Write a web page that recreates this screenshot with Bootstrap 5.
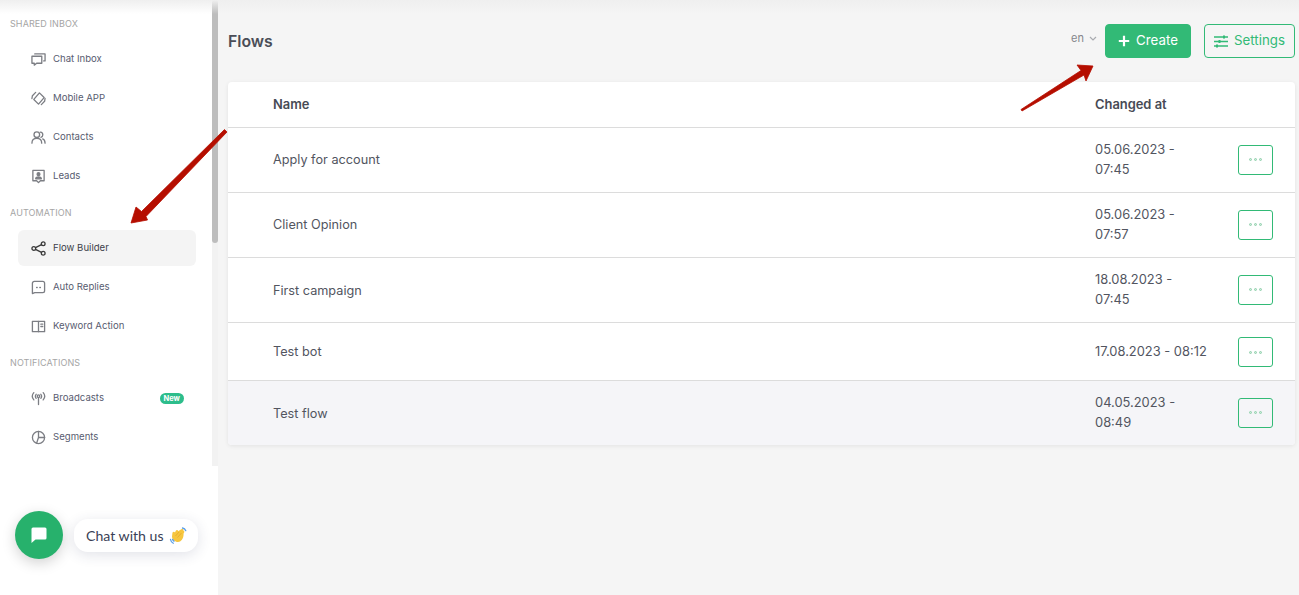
<!DOCTYPE html>
<html lang="en">
<head>
<meta charset="utf-8">
<title>Flows</title>
<link href="https://cdn.jsdelivr.net/npm/bootstrap@5.3.0/dist/css/bootstrap.min.css" rel="stylesheet">
<style>
html,body{height:595px;overflow:hidden}
body{background:#f5f5f5;font-family:Inter,"Liberation Sans",sans-serif;color:#4b4f5c;position:relative}
.shell{height:595px}
.side{width:218px;height:595px;background:#fff;flex:none;position:relative}
.side-scroll{width:218px;height:466px;padding-top:17px}
.track{position:absolute;right:0;top:0;width:6px;height:466px;background:#f2f2f2}
.thumb{width:6px;height:243px;background:#bdbdbd;border-radius:3px}
.sec{font-size:9px;line-height:14px;color:#a5a5a5;padding-left:10px;letter-spacing:.1px;text-transform:uppercase}
.item{margin-left:18px;width:178px;height:36px;border-radius:6px;padding-left:13px;gap:7px;font-size:9.6px;color:#585c70;text-decoration:none;margin-bottom:3px}
.item svg{width:15px;height:15px;flex:none;fill:none;stroke:#7c7e84;stroke-width:1.4;stroke-linecap:round;stroke-linejoin:round}
.item.on{background:#f4f4f4;color:#3c3f4a}
.item.on svg{stroke:#3a3a3a}
.first-list{margin-top:10px}
.sec-a{margin-top:12px;margin-bottom:10px}
.sec-b{margin-top:12px;margin-bottom:10px}
.new-pill{margin-left:auto;margin-right:12px;background:#2dbd8b;color:#fff;font-size:7.500px;font-weight:700;line-height:11px;height:11px;border-radius:6px;padding:0 4px}
.chat-round{position:absolute;left:15px;top:511px;width:48px;height:48px;border-radius:50%;background:#27b16c;box-shadow:0 4px 14px rgba(0,0,0,.18)}
.chat-label{position:absolute;left:74px;top:519px;width:124px;height:33px;border-radius:14px;background:#fff;box-shadow:0 3px 14px rgba(40,50,90,.14);font-family:Lato,sans-serif;font-size:14.100px;color:#3a3f56;padding-left:12px;gap:5px}
.main{flex:1;padding:24px 4px 0 10px;min-width:0}
.head{height:34px;margin-bottom:24px}
.title{font-size:15.800px;font-weight:600;color:#4a4d57;margin:0;position:relative;top:1px}
.lang{font-size:11px;color:#85878c;margin-right:8px;gap:5px;position:relative;top:-3px}
.btn-make{background:#32ba76;border:1px solid #32ba76;color:#fff;font-size:13.300px;height:34px;width:86px;border-radius:4px;padding:0;margin-right:13px;gap:6px}
.btn-set{background:transparent;border:1px solid #32ba76;color:#32ba76;font-size:13.300px;height:34px;width:91px;border-radius:4px;padding:0;gap:6px}
.sheet{background:#fff;border-radius:4px;box-shadow:0 1px 4px rgba(0,0,0,.08);overflow:hidden}
.flows{table-layout:fixed;margin:0;font-size:12.700px;--bs-table-color:#52555f;color:#52555f}
.flows th{font-weight:600;font-size:12.900px;color:#474a55;height:45px;border-bottom:1px solid #dcdcdc;vertical-align:middle;padding:0}
.flows td{vertical-align:middle;padding:0;border-bottom:1px solid #dcdcdc;line-height:20px;height:65px;color:#52555f}
.flows tr.short td{height:58px}
.flows tr:last-child td{border-bottom:0;height:65px}
.flows tr.hot td{background:#f5f5f8}
.flows td.nudge{padding-top:2px}
.stamp{font-size:12.900px}
.c-name{padding-left:45px!important}
.btn-dots{width:35px;height:30px;background:transparent;border:1px solid #32ba76;border-radius:3px;padding:0;gap:2px;margin-left:143px}
.btn-dots i{width:3px;height:3px;border-radius:50%;background:#cdebdb;border:.5px solid #8fd0ac;display:block}
.arrows{position:absolute;left:0;top:0;pointer-events:none}
.topfade{position:absolute;left:0;top:0;width:100%;height:14px;background:linear-gradient(#efefef,rgba(245,245,245,0));pointer-events:none}
</style>
</head>
<body>
<div class="shell d-flex">
  <aside class="side">
    <div class="side-scroll">
      <div class="sec">Shared Inbox</div>
      <div class="first-list">
        <a class="item d-flex align-items-center" href="#"><svg viewBox="0 0 16 16"><path d="M1 4.500h10.500v7.500H6l-2.500 2V12H1z"/><path d="M4 2h11v7.500h-1.500"/></svg>Chat Inbox</a>
        <a class="item d-flex align-items-center" href="#"><svg viewBox="0 0 16 16"><path d="M9 2l5 5-6 7-5-5z"/><path d="M5 1.500L1.500 5 1 8M11 14.500l3.500-3.500.5-3"/></svg>Mobile APP</a>
        <a class="item d-flex align-items-center" href="#"><svg viewBox="0 0 16 16"><circle cx="6.200" cy="5" r="3"/><path d="M1 14c0-3.200 2.200-5 5.200-5s5.200 1.800 5.200 5M10 2.200c1.600.2 2.600 1.400 2.600 2.800s-.8 2.400-2 2.800M12.500 9.500c1.600.7 2.500 2.300 2.500 4.500"/></svg>Contacts</a>
        <a class="item d-flex align-items-center" href="#"><svg viewBox="0 0 16 16"><path d="M2 1.500h12v11h-4L8 14.500l-2-2H2z"/><circle cx="8" cy="5.500" r="1.500" fill="#7c7e84"/><path d="M5 10.500c0-1.500 1.300-2 3-2s3 .5 3 2z" fill="#7c7e84"/></svg>Leads</a>
      </div>
      <div class="sec sec-a">Automation</div>
      <a class="item on d-flex align-items-center" href="#"><svg viewBox="0 0 16 16"><circle cx="3" cy="8" r="2"/><circle cx="13" cy="3" r="2"/><circle cx="13" cy="13" r="2"/><path d="M4.800 7.100L11.200 3.900M4.800 8.900l6.400 3.200"/></svg>Flow Builder</a>
      <a class="item d-flex align-items-center" href="#"><svg viewBox="0 0 16 16"><path d="M3.500 1.500h9a2 2 0 0 1 2 2v8a2 2 0 0 1-2 2H4l-2.500 1V3.500a2 2 0 0 1 2-2z"/><path d="M6 8h.6M9.400 8h.6"/></svg>Auto Replies</a>
      <a class="item d-flex align-items-center" href="#"><svg viewBox="0 0 16 16"><rect x="1.500" y="2.500" width="13" height="11"/><path d="M8 2.500v11M10.500 5.500h2M10.500 8h2"/></svg>Keyword Action</a>
      <div class="sec sec-b">Notifications</div>
      <a class="item d-flex align-items-center" href="#"><svg viewBox="0 0 16 16"><circle cx="8" cy="5.500" r="1.300"/><path d="M8 7v7.500M5.500 3.500c-1 1.300-1 3 0 4.300M10.500 3.500c1 1.300 1 3 0 4.300M3 1.800c-2 2.300-2 5.400 0 7.700M13 1.800c2 2.300 2 5.400 0 7.700"/></svg>Broadcasts<span class="new-pill">New</span></a>
      <a class="item d-flex align-items-center" href="#"><svg viewBox="0 0 16 16"><circle cx="8" cy="8" r="6.500"/><path d="M8 1.500V8h6.500M8 8l-2 6"/></svg>Segments</a>
    </div>
    <div class="track"><div class="thumb"></div></div>
    <div class="chat-round d-flex align-items-center justify-content-center">
      <svg width="18" height="18" viewBox="0 0 18 18"><path d="M3 1.500h12A1.500 1.500 0 0 1 16.500 3v9a1.500 1.500 0 0 1-1.500 1.500H5.500L1.500 17V3A1.500 1.500 0 0 1 3 1.500z" fill="#fff"/></svg>
    </div>
    <div class="chat-label d-flex align-items-center">Chat with us
      <svg width="18" height="18" viewBox="0 0 18 18"><path d="M3.500 5.500c.8-1.200 2-1 2.500 0l.8-1.800c.8-1.300 2.300-.8 2.200.6L12.800 2c1-.7 2 .3 1.400 1.200L15 4c.8.8.2 1.600-.4 2.400l-.1 2.100c-.4 3.500-2.500 6.500-5.500 6.500-3 0-6-2.500-6-5.500z" fill="#f6c63f"/><path d="M6.500 9l3.500-4M8.500 10.500L12.500 6" stroke="#e5a92c" stroke-width=".8" fill="none"/><path d="M1.500 12.500c.3 1.700 1.200 2.900 2.800 3.800M3.500 12.300c.3.800.8 1.400 1.500 1.900M13.500 1c1.400.2 2.700 1.100 3.300 2.700" fill="none" stroke="#5a9fe8" stroke-width="1.300" stroke-linecap="round"/></svg>
    </div>
  </aside>
  <main class="main">
    <header class="head d-flex align-items-center">
      <h1 class="title me-auto">Flows</h1>
      <div class="lang d-flex align-items-center">en
        <svg width="8" height="5" viewBox="0 0 8 5"><path d="M1 1l3 3 3-3" fill="none" stroke="#a9abb0" stroke-width="1.200"/></svg>
      </div>
      <button class="btn btn-make d-flex align-items-center justify-content-center" type="button">
        <svg width="12" height="12" viewBox="0 0 12 12"><path d="M6 .8v10.400M.8 6h10.400" stroke="#fff" stroke-width="2.200"/></svg>Create
      </button>
      <button class="btn btn-set d-flex align-items-center justify-content-center" type="button">
        <svg width="14" height="13" viewBox="0 0 14 13" fill="none" stroke="#32ba76" stroke-width="1.400"><path d="M0 2h14M0 6.500h14M0 11h14"/><path d="M10 .5v3M5.500 5v3M3 9.500v3" stroke-width="2"/></svg>Settings
      </button>
    </header>
    <section class="sheet">
      <table class="table flows">
        <colgroup><col style="width:867px"><col></colgroup>
        <thead><tr><th class="c-name">Name</th><th>Changed at</th></tr></thead>
        <tbody>
          <tr><td class="c-name">Apply for account</td><td><div class="d-flex align-items-center"><span class="stamp">05.06.2023 -<br>07:45</span><button class="btn btn-dots d-flex align-items-center justify-content-center position-absolute" type="button"><i></i><i></i><i></i></button></div></td></tr>
          <tr><td class="c-name">Client Opinion</td><td><div class="d-flex align-items-center"><span class="stamp">05.06.2023 -<br>07:57</span><button class="btn btn-dots d-flex align-items-center justify-content-center position-absolute" type="button"><i></i><i></i><i></i></button></div></td></tr>
          <tr><td class="c-name nudge">First campaign</td><td><div class="d-flex align-items-center"><span class="stamp">18.08.2023 -<br>07:45</span><button class="btn btn-dots d-flex align-items-center justify-content-center position-absolute" type="button"><i></i><i></i><i></i></button></div></td></tr>
          <tr class="short"><td class="c-name nudge">Test bot</td><td class="nudge"><div class="d-flex align-items-center"><span class="stamp">17.08.2023 - 08:12</span><button class="btn btn-dots d-flex align-items-center justify-content-center position-absolute" type="button"><i></i><i></i><i></i></button></div></td></tr>
          <tr class="hot"><td class="c-name nudge">Test flow</td><td><div class="d-flex align-items-center"><span class="stamp">04.05.2023 -<br>08:49</span><button class="btn btn-dots d-flex align-items-center justify-content-center position-absolute" type="button"><i></i><i></i><i></i></button></div></td></tr>
        </tbody>
      </table>
    </section>
  </main>
</div>
<svg class="arrows" width="1299" height="595" viewBox="0 0 1299 595">
  <path d="M131 223L136 207 141.500 211.500 224.500 129.500 227 132 146 216.500 147.500 220z" fill="#b50e00" stroke="#b50e00" stroke-width=".8" stroke-linejoin="round"/>
  <path d="M1021 109.500L1081 70.500 1077 65 1093 66 1086 81 1084 75 1022 111z" fill="#b50e00" stroke="#b50e00" stroke-width=".8" stroke-linejoin="round"/>
</svg>
<div class="topfade"></div>
</body>
</html>
